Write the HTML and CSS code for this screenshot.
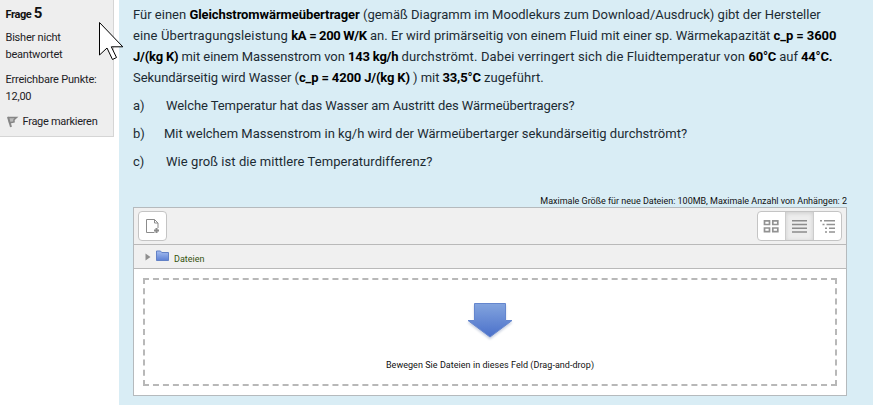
FILE: index.html
```
<!DOCTYPE html>
<html lang="de">
<head>
<meta charset="utf-8">
<title>Frage 5</title>
<link rel="stylesheet" href="styles.css">
</head>
<body>
<div class="question">
  <aside class="info">
    <h3 class="no">Frage <span class="qno">5</span></h3>
    <div class="state">Bisher nicht<br>beantwortet</div>
    <div class="grade">Erreichbare Punkte:<br>12,00</div>
    <div class="flag">
      <svg width="13" height="13" viewBox="0 0 13 13"><path d="M2 2l3 10" stroke="#888" stroke-width="2" fill="none"/><path d="M2.500 2.500h8L8 4.800v2.200l-4.200.8z" fill="#bbb" stroke="#858585" stroke-width="1.500"/></svg>
      <span>Frage markieren</span>
    </div>
  </aside>
  <main class="content">
    <div class="qtext">
      <p class="intro">
        <span class="line l1">Für einen <b>Gleichstromwärmeübertrager</b> (gemäß Diagramm im Moodlekurs zum Download/Ausdruck) gibt der Hersteller</span>
        <span class="line l2"><span class="wide">eine Übertragungsleistung </span><b class="tight">kA = 200 W/K</b> an. Er wird primärseitig von einem Fluid mit einer sp. Wärmekapazität <b>c_p = 3600</b></span>
        <span class="line l3"><b>J/(kg K)</b> mit einem Massenstrom von <b>143 kg/h</b> <span class="wide">durchströmt. Dabei verringert sich die Fluidtemperatur von </span><b>60°C</b> auf <b>44°C.</b></span>
        <span class="line l4">Sekundärseitig wird Wasser (<b>c_p = 4200 J/(kg K)</b> ) mit <b>33,5°C</b> <span class="last">zugeführt.</span></span>
      </p>
      <p class="item"><span class="mark">a)</span><span class="ask-a">Welche Temperatur hat das Wasser am Austritt des Wärmeübertragers?</span></p>
      <p class="item item-b"><span class="mark">b)</span><span>Mit welchem Massenstrom in kg/h wird der Wärmeübertarger sekundärseitig durchströmt?</span></p>
      <p class="item"><span class="mark">c)</span><span class="ask-c">Wie groß ist die mittlere Temperaturdifferenz?</span></p>
    </div>
    <div class="limits">Maximale Größe für neue Dateien: 100MB, Maximale Anzahl von Anhängen: 2</div>
    <section class="filemanager">
      <div class="toolbar">
        <div class="btn">
          <svg width="28" height="28" viewBox="0 0 28 28" fill="none" stroke="#8c8c8c"><path d="M15.500 20.500H7.500v-13h8l3.500 3.500v5M15.500 7.500v3.500H19"/><path d="M15 18.500h5M17.500 16v5" stroke-width="2"/></svg>
        </div>
        <div class="views">
          <div class="view"><svg width="27" height="28" viewBox="0 0 27 28" fill="none" stroke="#929292" stroke-width="1.7"><path d="M6.500 8.800h5v3.700h-5zM14.800 8.800h5v3.700h-5zM6.500 16h5v3.700h-5zM14.800 16h5v3.700h-5z"/></svg></div>
          <div class="view active"><svg width="27" height="28" viewBox="0 0 27 28" fill="none" stroke="#8c8c8c" stroke-width="1.5"><path d="M6 8.700h15M6 12.500h15M6 16.300h15M6 20h15"/></svg></div>
          <div class="view"><svg width="27" height="28" viewBox="0 0 27 28" fill="none" stroke="#929292" stroke-width="1.5"><path d="M6 8.700h2M10 8.700h11M8.500 12.500h2M12.500 12.500H21M11 16.300h2M15 16.300h6M11 20h2M15 20h6"/></svg></div>
        </div>
      </div>
      <div class="path">
        <svg width="6" height="8" viewBox="0 0 6 8"><path d="M.5.5v7L5.500 4z" fill="#8e8e8e"/></svg>
        <svg class="folder" width="13" height="11" viewBox="0 0 13 11"><defs><linearGradient id="f" x1="0" y1="0" x2="0" y2="1"><stop offset="0" stop-color="#a5bdf0"/><stop offset="1" stop-color="#5c80d4"/></linearGradient></defs><path d="M.5 10.500v-9.500h4l1.200 1.500h6.800v8z" fill="url(#f)" stroke="#6281c6"/></svg>
        <a class="crumb">Dateien</a>
      </div>
      <div class="body">
        <div class="drop">
          <svg width="46" height="36" viewBox="0 0 46 36"><defs><linearGradient id="a" x1="0" y1="0" x2="0" y2="1"><stop offset="0" stop-color="#83a4de"/><stop offset="1" stop-color="#4a70ca"/></linearGradient></defs><path d="M7.500.5h31v17H45L23 34 1 17.500h6.500z" fill="url(#a)" stroke="#6486ce"/></svg>
          <span>Bewegen Sie Dateien in dieses Feld (Drag-and-drop)</span>
        </div>
      </div>
    </section>
  </main>
</div>
<svg class="pointer" width="27" height="40" viewBox="0 0 27 40"><path d="M1.500 1.500v32.500l7.500-7 5.500 11.500 4-2-5.200-10.700h11.500z" fill="#fff" stroke="#000"/></svg>
</body>
</html>
```
FILE: styles.css
```
* { box-sizing: border-box; }
body { margin: 0; height: 405px; overflow: hidden; background: #fff; color: #1d2125; font-family: Roboto, "Liberation Sans", sans-serif; }
.question { display: flex; align-items: flex-start; height: 405px; }
.info { width: 114px; height: 137px; margin-right: 5px; padding: 4px 0 0 5.5px; background: #eee; border: solid #d5d5d5; border-width: 0 1px 1px 0; font-size: 11px; line-height: 17px; letter-spacing: -.21px; white-space: nowrap; }
.no { margin: 0 0 7px; height: 18px; line-height: 18px; font-size: 11px; letter-spacing: -.4px; color: #111; }
.qno { font-size: 15px; }
.grade { margin-top: 8px; }
.flag { display: flex; align-items: center; gap: 4px; margin-top: 8px; letter-spacing: -.28px; }
.content { flex: 1; height: 405px; padding: 4px 26px 0 14px; background: #d9edf5; }
.qtext { font-size: 13px; white-space: nowrap; color: #1c2b33; }
.qtext b { color: #000; letter-spacing: -.08px; }
.intro { margin: 0; line-height: 21px; }
.line { display: block; }
.wide { letter-spacing: .13px; }
.qtext .tight { letter-spacing: -.35px; }
.l2 { letter-spacing: .02px; }
.l3, .l4 { letter-spacing: -.06px; }
.l3 b { letter-spacing: -.2px; }
.l4 b { letter-spacing: -.15px; }
.last { letter-spacing: .09px; }
.item { display: flex; margin: 7px 0 0; line-height: 21px; }
.mark { width: 33px; }
.item-b .mark { width: 31px; }
.ask-a { letter-spacing: -.07px; }
.ask-c { letter-spacing: .06px; }
.limits { margin-top: 23px; height: 12px; line-height: 12px; font-size: 9px; letter-spacing: -.02px; text-align: right; color: #111; }
.filemanager { height: 189px; border: 1px solid #b5babd; background: #fff; }
.toolbar { display: flex; justify-content: space-between; height: 37px; padding: 3px 4px 0; background: #f0f0f0; border-bottom: 1px solid #b9b9b9; }
.btn, .views { display: flex; height: 30px; background: #fff; border: 1px solid #c4c4c4; border-radius: 4px; overflow: hidden; }
.btn { width: 29px; }
.view { width: 28px; height: 28px; }
.view:first-child { width: 27px; }
.view + .view { border-left: 1px solid #ccc; }
.view.active { background: #ededed; box-shadow: inset 0 1px 4px #ccc; }
svg { display: block; flex: none; }
.path { display: flex; align-items: center; height: 24px; padding-left: 11px; background: #f0f0f0; border-bottom: 1px solid #b9b9b9; }
.folder { margin: 0 5px 2px 5px; }
.crumb { margin-top: 4px; font-size: 9px; color: #34520c; }
.body { padding: 9px; }
.drop { display: flex; flex-direction: column; align-items: center; height: 108px; padding-top: 23px; border: 2px dashed #b8b8b8; font-size: 9px; color: #111; letter-spacing: .04px; }
.drop svg { filter: drop-shadow(0 2px 1px #ccd3e2); }
.drop span { margin-top: 20px; line-height: 12px; }
.pointer { position: absolute; left: 98px; top: 21px; }
```
